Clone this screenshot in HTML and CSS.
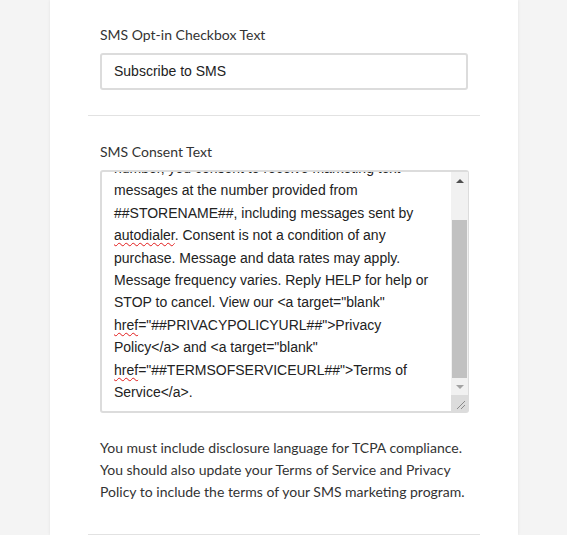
FILE: index.html
```html
<!DOCTYPE html>
<html>
<head>
<meta charset="utf-8">
<link rel="stylesheet" href="styles.css">
</head>
<body>
<div class="card">
  <section class="field">
    <div class="label">SMS Opt-in Checkbox Text</div>
    <div class="input">Subscribe to SMS</div>
  </section>
  <section class="field field-consent">
    <div class="label">SMS Consent Text</div>
    <div class="textarea">
      <div class="ta-view">
        <div class="ta-text">number, you consent to receive marketing text
messages at the number provided from
##STORENAME##, including messages sent by
<span class="typo">autodialer</span>. Consent is not a condition of any
purchase. Message and data rates may apply.
Message frequency varies. Reply HELP for help or
STOP to cancel. View our &lt;a target="blank"
<span class="typo">href</span>="##PRIVACYPOLICYURL##"&gt;Privacy
Policy&lt;/a&gt; and &lt;a target="blank"
<span class="typo">href</span>="##TERMSOFSERVICEURL##"&gt;Terms of
Service&lt;/a&gt;.</div>
      </div>
      <div class="sb">
        <div class="sb-btn"><span class="arrow-up"></span></div>
        <div class="sb-track">
          <div class="sb-thumb"></div>
        </div>
        <div class="sb-btn"><span class="arrow-down"></span></div>
        <div class="sb-corner">
          <svg width="17" height="16" viewBox="0 0 17 16"><path d="M6 14 L14 6 M10 14 L14 10" stroke="#8a8a8a" stroke-width="1" fill="none"/></svg>
        </div>
      </div>
    </div>
    <p class="help">You must include disclosure language for TCPA compliance. You should also update your Terms of Service and Privacy Policy to include the terms of your SMS marketing program.</p>
  </section>
</div>
</body>
</html>
```

FILE: styles.css
```css
html, body {
  margin: 0;
  padding: 0;
}
body {
  background: #f4f4f4;
  height: 535px;
  overflow: hidden;
}
.card {
  margin-left: 50px;
  width: 468px;
  min-height: 535px;
  background: #fff;
  box-shadow: 0 0 3px rgba(0, 0, 0, 0.08);
  padding: 0 38px;
  box-sizing: border-box;
}
.field {
  padding: 25px 12px 25px;
  border-bottom: 1px solid #e2e2e2;
}
.field-consent {
  padding-top: 26px;
  padding-bottom: 31px;
}
.label {
  font-family: "Lato", "Liberation Sans", sans-serif;
  font-size: 14px;
  line-height: 20px;
  color: #333;
  margin-bottom: 8px;
}
.input {
  height: 37px;
  box-sizing: border-box;
  border: 2px solid #dcdcdc;
  border-radius: 3px;
  padding: 0 12px;
  font-family: "Liberation Sans", Arial, sans-serif;
  font-size: 14px;
  line-height: 33px;
  color: #222;
}
.textarea {
  display: flex;
  height: 243px;
  box-sizing: border-box;
  border: 2px solid #dcdcdc;
  border-right-width: 1px;
  border-radius: 3px;
  width: 369px;
}
.ta-view {
  flex: 1;
  overflow: hidden;
  padding: 0 0 0 12px;
}
.ta-text {
  margin-top: -15px;
  white-space: pre;
  font-family: "Liberation Sans", Arial, sans-serif;
  font-size: 14px;
  line-height: 22.4px;
  color: #222;
}
.typo {
  text-decoration: underline wavy #e21b1b;
  text-decoration-thickness: 1px;
  text-underline-offset: 2px;
}
.sb {
  width: 17px;
  display: flex;
  flex-direction: column;
  background: #f1f1f1;
}
.sb-btn {
  height: 17px;
  display: flex;
  align-items: center;
  justify-content: center;
}
.arrow-up {
  width: 0;
  height: 0;
  border-left: 4px solid transparent;
  border-right: 4px solid transparent;
  border-bottom: 4px solid #505050;
}
.arrow-down {
  width: 0;
  height: 0;
  border-left: 4px solid transparent;
  border-right: 4px solid transparent;
  border-top: 4px solid #a3a3a3;
}
.sb-track {
  flex: 1;
  display: flex;
  flex-direction: column;
  justify-content: flex-end;
  padding: 0 1px;
}
.sb-thumb {
  height: 158px;
  background: #c1c1c1;
}
.sb-corner {
  height: 16px;
  background: #dcdcdc;
}
.sb-corner svg {
  display: block;
}
.help {
  margin: 24px 0 0;
  font-family: "Lato", "Liberation Sans", sans-serif;
  font-size: 14px;
  line-height: 22px;
  color: #333;
}
```
